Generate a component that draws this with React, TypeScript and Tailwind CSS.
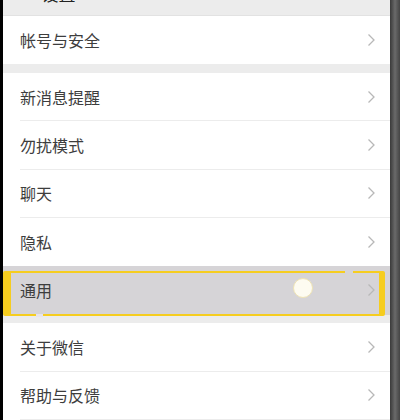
import React from 'react';

const Chevron: React.FC = () => (
  <svg width="9" height="14" viewBox="0 0 9 14" className="shrink-0">
    <polyline points="1.5,1.5 7,7 1.5,12.5" fill="none" stroke="#b8b8b8" strokeWidth="1.3" />
  </svg>
);

const Row: React.FC<{ title: string; last?: boolean; active?: boolean }> = ({ title, last, active }) => (
  <div className={`h-[49px] flex items-center pl-[17px] ${active ? 'bg-[#d6d4d7]' : 'bg-white'}`}>
    <div className={`flex-1 h-full flex items-center pr-[14px] ${last || active ? '' : 'border-b border-[#ececec]'}`}>
      <span className="flex-1 text-[16px] text-[#3d3d3d]">{title}</span>
      <Chevron />
    </div>
  </div>
);

const App: React.FC = () => {
  return (
    <div
      className="w-[400px] h-[420px] overflow-hidden flex bg-[#ececec]"
      style={{ fontFamily: '"Noto Sans CJK SC", "Noto Sans", sans-serif' }}
    >
      <div className="w-[3px] bg-black shrink-0" />

      <div className="flex-1 relative flex flex-col">
        {/* header, scrolled mostly out of view */}
        <div className="h-[16px] overflow-hidden bg-[#ececec] border-b border-[#e2e2e2]">
          <div className="-mt-[19px] pl-[17px] flex items-center gap-3 text-[17px] text-[#222]">
            <span>&lt;</span>
            <span>设置</span>
          </div>
        </div>

        <Row title="帐号与安全" last />

        <div className="h-[9px]" />
        <Row title="新消息提醒" />
        <Row title="勿扰模式" />
        <Row title="聊天" />
        <Row title="隐私" last />
        <Row title="通用" active />

        <div className="h-[9px]" />
        <Row title="关于微信" />
        <Row title="帮助与反馈" />

        {/* yellow highlight frame */}
        <div className="absolute left-0 top-[271px] w-[382px] h-[45px] border-[#f6cd1f] border-l-[8px] border-r-[6px] border-t-[2px] border-b-[2px] rounded-[2px]" />
        <div className="absolute left-[342px] top-[270px] w-[8px] h-[4px] bg-[#d6d4d7]" />
        <div className="absolute left-[33px] top-[314px] w-[7px] h-[3px] bg-[#e8e4ea]" />

        {/* touch point */}
        <div className="absolute left-[290px] top-[278px] w-[20px] h-[20px] rounded-full bg-[#fdfbf1] border border-[#efe3b4]" />
      </div>

      <div className="w-[10px] shrink-0 bg-gradient-to-r from-[#3a3a3a] via-[#6a6a6a] to-[#444]" />
    </div>
  );
};

export default App;
